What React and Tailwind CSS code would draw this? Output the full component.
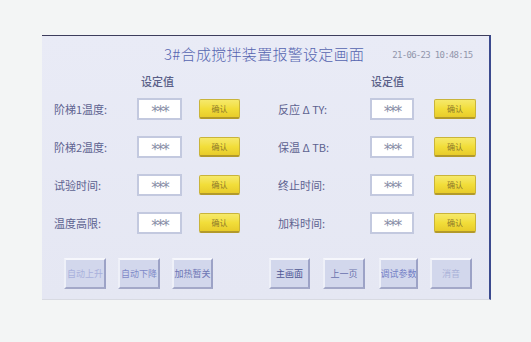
import React from "react";

const F = { fontFamily: '"Noto Sans CJK SC", "Noto Sans", sans-serif' };

function Input({ w }) {
  return (
    <div
      className={`${w} h-[22px] bg-white border-2 border-[#c3c9df] flex items-center justify-center`}
    >
      <span
        className="text-[15px] leading-none text-[#8a8fa8] tracking-[-2px] translate-y-[3px]"
        style={{ fontFamily: '"DejaVu Sans", sans-serif' }}
      >
        ***
      </span>
    </div>
  );
}

function Ok({ w, ml }) {
  return (
    <div
      className={`${w} ${ml} h-[20px] rounded-[2px] border border-[#c9b43a] border-b-2 border-b-[#b39a2a] bg-gradient-to-b from-[#f6e96a] via-[#f2de3a] to-[#e8cc2a] flex items-center justify-center text-[8px] text-[#8f7a2c]`}
    >
      确认
    </div>
  );
}

function Bev({ label, ml, w, tc }) {
  return (
    <div
      className={`${w} ${ml} h-[31px] bg-[#d2d7ec] border-2 border-t-[#f6f7fc] border-l-[#eef0f8] border-r-[#9ca2c6] border-b-[#a3a8c8] flex items-center justify-center text-[9px] whitespace-nowrap overflow-hidden ${tc}`}
    >
      {label}
    </div>
  );
}

export default function App() {
  const left = ["阶梯1温度:", "阶梯2温度:", "试验时间:", "温度高限:"];
  const right = ["反应 Δ TY:", "保温 Δ TB:", "终止时间:", "加料时间:"];
  return (
    <div className="w-[531px] h-[342px] bg-[#f3f5f5] pt-[35px] pl-[42px]" style={F}>
      <div className="w-[449px] h-[265px] bg-gradient-to-b from-[#e9ebf6] to-[#e5e7f3] border-t border-t-[#3d3d5c] border-r-2 border-r-[#3b4a8e] border-b border-b-[#d8dae2] flex flex-col">
        <div className="flex items-end h-[25px]">
          <div className="ml-[122px] text-[15px] leading-none font-light text-[#5564b0] tracking-[0.3px]">
            3#合成搅拌装置报警设定画面
          </div>
          <div
            className="ml-[28px] mb-[1px] text-[9px] leading-none text-[#9296ac] tracking-[-0.7px]"
            style={{ fontFamily: '"DejaVu Sans Mono", monospace' }}
          >
            21-06-23 10:48:15
          </div>
        </div>
        <div className="flex mt-[13px] h-[14px] items-center text-[11px] font-medium text-[#5a5f88]">
          <div className="ml-[99px]">设定值</div>
          <div className="ml-[197px]">设定值</div>
        </div>
        <div className="flex flex-col gap-[16px] mt-[10px]">
          {left.map((l, i) => (
            <div key={i} className="flex items-center h-[22px]">
              <div className="ml-[12px] w-[83px] text-[11px] text-[#5d6290]">{l}</div>
              <Input w="w-[45px]" />
              <Ok w="w-[41px]" ml="ml-[17px]" />
              <div className="ml-[38px] w-[92px] text-[11px] text-[#5d6290] whitespace-pre">{right[i]}</div>
              <Input w="w-[44px]" />
              <Ok w="w-[42px]" ml="ml-[20px]" />
            </div>
          ))}
        </div>
        <div className="flex mt-[24px]">
          <Bev label="自动上升" ml="ml-[22px]" w="w-[42px]" tc="text-[#a9b1dc]" />
          <Bev label="自动下降" ml="ml-[12px]" w="w-[42px]" tc="text-[#7f89c8]" />
          <Bev label="加热暂关" ml="ml-[12px]" w="w-[41px]" tc="text-[#6c75b4]" />
          <Bev label="主画面" ml="ml-[56px]" w="w-[41px]" tc="text-[#4e5694]" />
          <Bev label="上一页" ml="ml-[13px]" w="w-[42px]" tc="text-[#6a72ac]" />
          <Bev label="调试参数" ml="ml-[14px]" w="w-[39px]" tc="text-[#7380c6]" />
          <Bev label="消音" ml="ml-[12px]" w="w-[42px]" tc="text-[#aab2d8]" />
        </div>
      </div>
    </div>
  );
}
